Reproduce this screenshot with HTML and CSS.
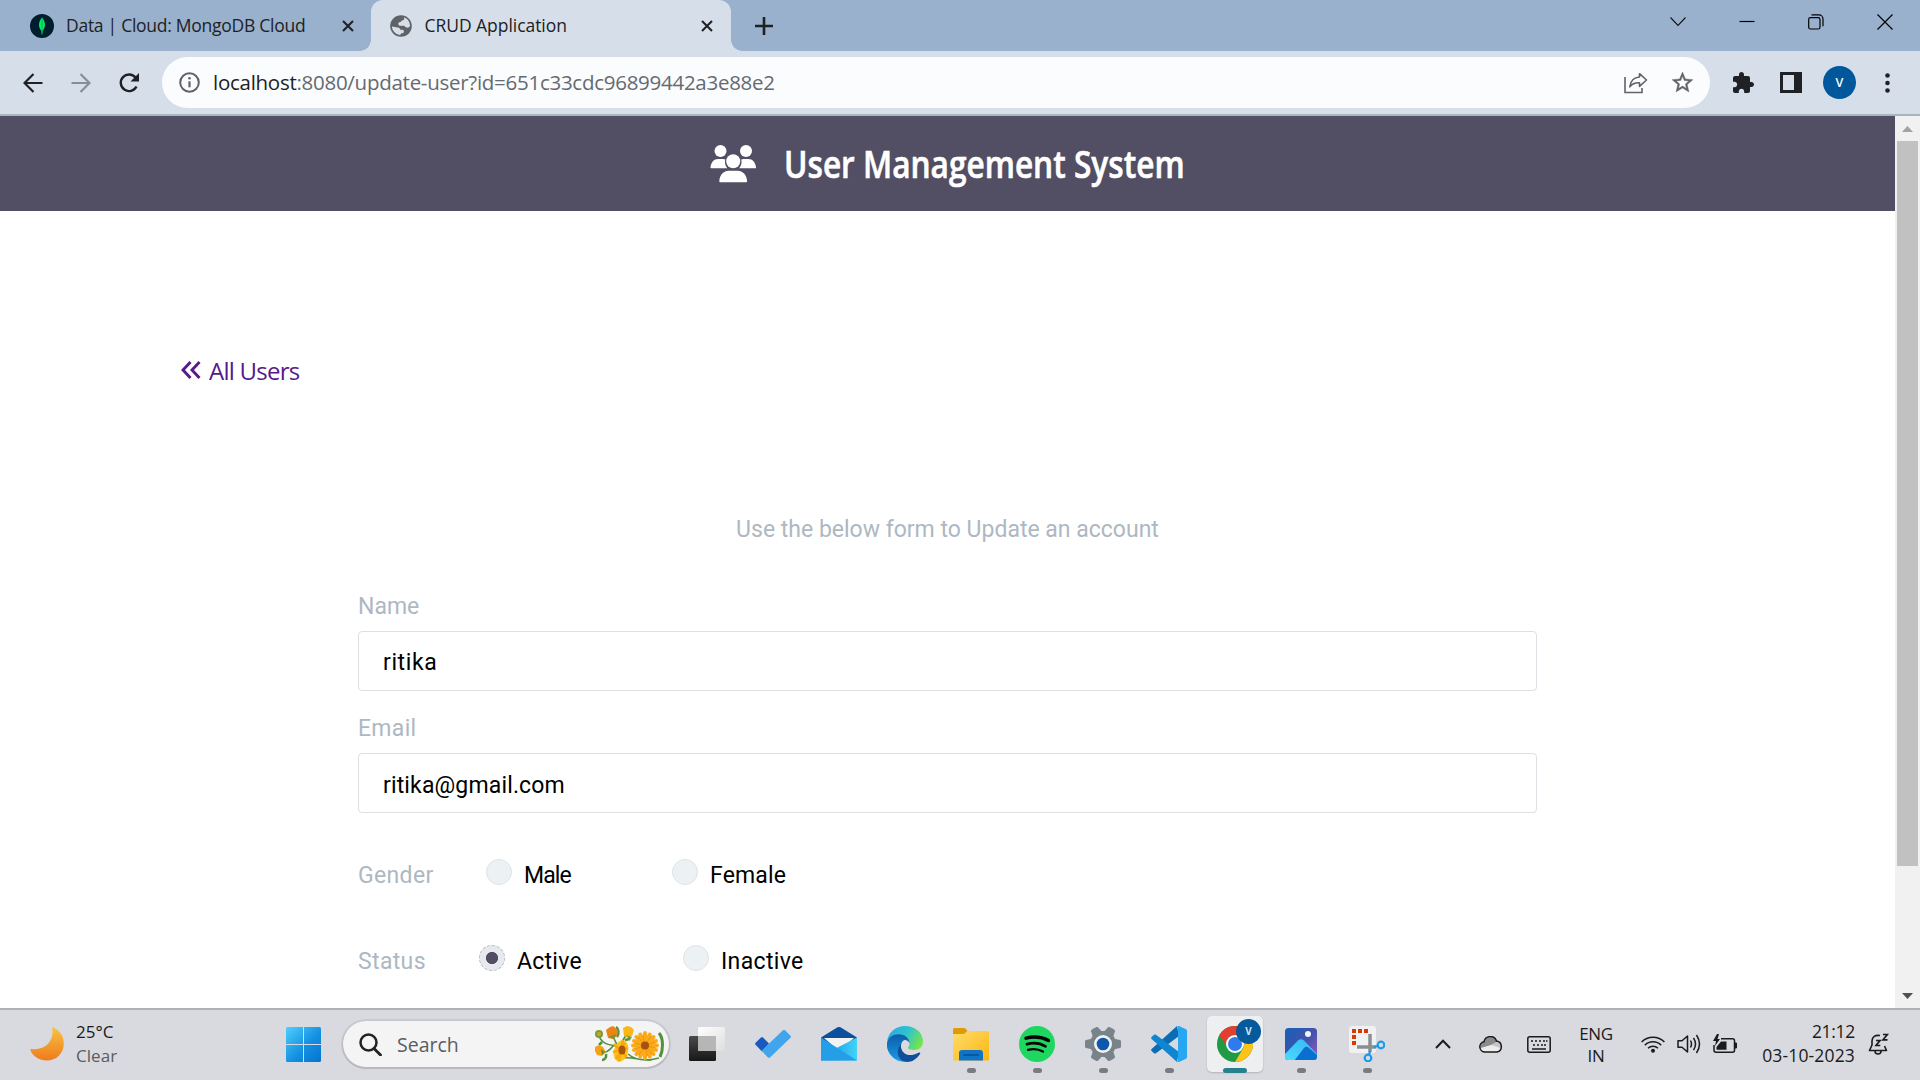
FILE: index.html
```html
<!DOCTYPE html>
<html lang="en">
<head>
<meta charset="utf-8">
<title>CRUD Application</title>
<link rel="stylesheet" href="styles.css">
</head>
<body>
<div class="tabstrip">
  <div class="tab tab-idle">
    <svg class="mongo" width="24" height="24" viewBox="0 0 24 24"><circle cx="12" cy="12" r="12" fill="#001e2b"/><path d="M12 3.500c-3.200 3.600-4.400 8.900-.6 13.600l.3 3.400h.6l.3-3.400C16.400 12.400 15.200 7.100 12 3.500z" fill="#00ed64"/><path d="M12 4v16" stroke="#00a35c" stroke-width=".8"/></svg>
    <span class="tab-title title-a">Data | Cloud: MongoDB Cloud</span>
    <svg class="close-a" width="12" height="12" viewBox="0 0 12 12"><path d="M1 1l10 10M11 1L1 11" stroke="#202124" stroke-width="2.100"/></svg>
  </div>
  <div class="tab tab-active">
    <svg class="globe" width="26" height="26" viewBox="0 0 24 24"><path fill="#5f6368" d="M12 2C6.480 2 2 6.480 2 12s4.480 10 10 10 10-4.480 10-10S17.520 2 12 2zm-1 18.200c-4.200-.4-7.300-3.900-7.300-7.700L9 13.300c1.500 0 2.300.9 2.300 2.200h1.800c1 0 1.600.7 1.600 1.700 0 1.200-1.200 1.500-2.200 1.500zM20.300 12c-1 2-2.500 1.700-3.700 1.200-1-.5-1.200-1.400-2.300-1.400h-2.600c-1.400 0-2.200-.8-2.200-1.900 0-1 .8-1.700 1.900-1.700.9 0 .9-1.200 1.900-1.500.9-.3 1.700-.5 1.700-1.500 0-.5-.2-.9-.5-1.200 3.500.9 5.800 4.200 5.800 8z"/></svg>
    <span class="tab-title title-b">CRUD Application</span>
    <svg class="close-b" width="12" height="12" viewBox="0 0 12 12"><path d="M1 1l10 10M11 1L1 11" stroke="#202124" stroke-width="2.100"/></svg>
  </div>
  <svg class="newtab" width="18" height="18" viewBox="0 0 18 18"><path d="M9 0v18M0 9h18" stroke="#202124" stroke-width="2.600"/></svg>
  <div class="wincontrols">
    <svg width="16" height="10" viewBox="0 0 16 10"><path d="M.5 .5L8 8.500l7.500-8" fill="none" stroke="#111" stroke-width="1.100"/></svg>
    <svg width="16" height="10" viewBox="0 0 16 10"><path d="M.5 4.500h15" stroke="#000" stroke-width="1.200"/></svg>
    <svg width="16" height="16" viewBox="0 0 16 16"><rect x=".7" y="3.700" width="11.300" height="11.300" rx="1.800" fill="none" stroke="#000" stroke-width="1.200"/><path d="M3.500.9h7.500a4 4 0 0 1 4 4v7.300" fill="none" stroke="#000" stroke-width="1.200"/></svg>
    <svg width="16" height="16" viewBox="0 0 16 16"><path d="M.5.5l15 15M15.500.5l-15 15" stroke="#000" stroke-width="1.200"/></svg>
  </div>
</div>

<div class="toolbar">
  <svg class="nav-back" width="20" height="20" viewBox="0 0 20 20"><path d="M19.500 10H2M10.500 1L1.500 10l9 9" fill="none" stroke="#202124" stroke-width="2.200"/></svg>
  <svg class="nav-forward" width="20" height="20" viewBox="0 0 20 20"><path d="M.5 10H18M9.500 1l9 9-9 9" fill="none" stroke="#878e97" stroke-width="2.200"/></svg>
  <svg class="nav-reload" width="22" height="22" viewBox="0 0 22 22"><path d="M18.500 14.500A8.300 8.300 0 1 1 17.500 5.500L19.500 8" fill="none" stroke="#202124" stroke-width="2.400"/><path d="M21 1v8.500h-8.500z" fill="#202124"/></svg>
  <div class="omnibox">
    <svg width="21" height="21" viewBox="0 0 21 21"><circle cx="10.500" cy="10.500" r="9.300" fill="none" stroke="#5f6368" stroke-width="2"/><path d="M10.500 9.300v6" stroke="#5f6368" stroke-width="2.200"/><circle cx="10.500" cy="6.300" r="1.300" fill="#5f6368"/></svg>
    <span class="url"><b>localhost</b>:8080/update-user?id=651c33cdc96899442a3e88e2</span>
    <svg class="share" width="24" height="22" viewBox="0 0 24 22"><path d="M1 5v15.500h17v-4.500" fill="none" stroke="#5f6368" stroke-width="1.600"/><path d="M15.500 1.700l7 6.300-7 6.300v-3.600c-4.500-.2-7.500 1-9.700 4.100.6-5.500 3.800-9.300 9.700-9.800z" fill="none" stroke="#5f6368" stroke-width="1.600" stroke-linejoin="round"/></svg>
    <svg class="star" width="25" height="25" viewBox="0 0 24 24"><path fill="#5f6368" stroke="#5f6368" stroke-width=".4" d="M22 9.240l-7.190-.62L12 2 9.190 8.630 2 9.240l5.460 4.730L5.820 21 12 17.270 18.180 21l-1.630-7.030L22 9.240zM12 15.400l-3.760 2.270 1-4.280-3.320-2.880 4.380-.38L12 6.100l1.710 4.040 4.380.38-3.320 2.880 1 4.280L12 15.400z"/></svg>
  </div>
  <svg class="puzzle" width="24" height="24" viewBox="0 0 24 24"><path fill="#202124" d="M20.500 11H19V7c0-1.100-.9-2-2-2h-4V3.500C13 2.120 11.880 1 10.500 1S8 2.120 8 3.500V5H4c-1.100 0-1.990.9-1.990 2v3.800H3.500c1.490 0 2.700 1.210 2.700 2.700s-1.210 2.700-2.700 2.700H2V20c0 1.100.9 2 2 2h3.800v-1.500c0-1.490 1.210-2.700 2.700-2.700s2.700 1.210 2.700 2.700V22H17c1.100 0 2-.9 2-2v-4h1.500c1.380 0 2.500-1.120 2.500-2.500S21.880 11 20.500 11z"/></svg>
  <svg class="sidepanel" width="22" height="21" viewBox="0 0 22 21"><path fill="#202124" fill-rule="evenodd" d="M0 0h22v21H0zM3 3v15h11V3z"/></svg>
  <span class="avatar">V</span>
  <svg class="dots" width="5" height="20" viewBox="0 0 5 20"><g fill="#202124"><circle cx="2.500" cy="2.500" r="2.300"/><circle cx="2.500" cy="10" r="2.300"/><circle cx="2.500" cy="17.500" r="2.300"/></g></svg>
</div>

<div class="viewport">
  <div class="page">
    <header class="site-header">
      <svg width="46" height="38" viewBox="0 0 46 38"><g fill="#fff"><circle cx="10.500" cy="6" r="6"/><circle cx="36" cy="6" r="6"/><path d="M1.200 23.200c-.5 0-.8-.4-.7-1C1 17.500 4 14 8 14h5c.9 0 1.600.2 2.300.5-.9 3.400 0 6.500 2 8.700zM45.300 23.200c.5 0 .8-.4.700-1-.5-4.700-3.500-8.200-7.500-8.200h-5c-.9 0-1.600.2-2.300.5.9 3.400 0 6.500-2 8.700z"/><circle cx="23.200" cy="16.200" r="7"/><path d="M10.500 37.300c-.8 0-1.300-.6-1.200-1.400.5-6 4.400-10.200 9.400-10.200h9c5 0 8.900 4.200 9.400 10.200.1.800-.4 1.400-1.200 1.400z"/></g></svg>
      <h1 class="brand"><span>User Management System</span></h1>
    </header>
    <a class="all-users" href="#"><svg width="20" height="18" viewBox="0 0 20 18"><path d="M9.500 1L2 9l7.500 8M18.500 1L11 9l7.500 8" fill="none" stroke="#551a8b" stroke-width="2.900"/></svg><span>All Users</span></a>
    <form class="form">
      <p class="lead">Use the below form to Update an account</p>
      <label class="label">Name</label>
      <div class="field field-name">ritika</div>
      <label class="label label-email">Email</label>
      <div class="field field-email">ritika@gmail.com</div>
      <div class="row">
        <span class="group">Gender</span>
        <label class="opt male"><i class="radio"></i><span>Male</span></label>
        <label class="opt female"><i class="radio"></i><span>Female</span></label>
      </div>
      <div class="row row-status">
        <span class="group">Status</span>
        <label class="opt active"><i class="radio on"></i><span>Active</span></label>
        <label class="opt inactive"><i class="radio"></i><span>Inactive</span></label>
      </div>
    </form>
  </div>
  <div class="scrollbar">
    <svg width="11" height="6" viewBox="0 0 11 6"><path d="M5.500 0L11 6H0z" fill="#a3a3a3"/></svg>
    <div class="thumb"></div>
    <svg class="down" width="11" height="6" viewBox="0 0 11 6"><path d="M5.500 6L11 0H0z" fill="#505050"/></svg>
  </div>
</div>

<div class="taskbar">
  <div class="weather">
    <svg width="34" height="34" viewBox="0 0 34 34"><defs><linearGradient id="moon" x1="0" y1="0" x2="0" y2="1"><stop offset="0" stop-color="#f6c544"/><stop offset="1" stop-color="#f07a1c"/></linearGradient></defs><path d="M22 0c8 3 12 9.500 11.800 17C33.500 27 26 33.500 17 33.500 9.500 33.500 3 29.500.5 23.500c-.4-1 .2-1.700 1.200-1.500C14 23.500 25 15 22 0z" fill="url(#moon)"/></svg>
    <div class="two-lines"><div>25°C</div><div class="muted">Clear</div></div>
  </div>
  <svg class="start" width="35" height="35" viewBox="0 0 35 35"><defs><linearGradient id="win" gradientUnits="userSpaceOnUse" x1="0" y1="0" x2="35" y2="35"><stop offset="0" stop-color="#4fd0fd"/><stop offset=".55" stop-color="#1491e2"/><stop offset="1" stop-color="#0573d0"/></linearGradient></defs><path fill="url(#win)" d="M1.500 0H17v17H0V1.500A1.500 1.500 0 0 1 1.500 0zM18 0h15.500A1.500 1.500 0 0 1 35 1.500V17H18zM0 18h17v17H1.500A1.500 1.500 0 0 1 0 33.500zM18 18h17v15.500a1.500 1.500 0 0 1-1.500 1.500H18z"/></svg>
  <div class="search">
    <svg width="23" height="23" viewBox="0 0 23 23"><circle cx="9.500" cy="9.500" r="8" fill="none" stroke="#222" stroke-width="2.500"/><path d="M15 15.500l6.500 6.500" stroke="#222" stroke-width="2.800" stroke-linecap="round"/></svg>
    <span>Search</span>
    <svg class="flowers" width="72" height="38" viewBox="0 0 72 38">
      <g fill="none" stroke="#54913c" stroke-width="1.600"><path d="M5 11c3 8 10 9 18 10M16 8c5 4 4 8 7 11M33 8l-6 11M7 28c6 0 9-3 12-7M34 29c8 7 20 7 31 4M24 34c12-4 20 2 34 1"/><path d="M65 8c5 6 4 18 1 24" stroke-width="3"/><path d="M23 12c3-4 1-9-1-10M8 17l-3 3M12 29c1 4-2 6-4 6M36 14l-5 1" stroke-width="2.500"/></g>
      <circle cx="5" cy="9" r="4" fill="#7e9a35"/><circle cx="5" cy="9" r="2" fill="#c9a62d"/>
      <path d="M12 5l4-3 3-1 5 4-1 6-4 3-5-1z" fill="#ea8414"/><path d="M15 12l5 2 2-5z" fill="#719434"/>
      <path d="M29 3l4-2 4 1 3 3-2 6-4 2-4-2z" fill="#fbb815"/><path d="M32 10l6 2-2 3z" fill="#76a03c"/>
      <path d="M1 22l4-2 4 2 3 5-4 4-5-1-2-4z" fill="#f7a012"/><path d="M7 24l4 3-3 3z" fill="#638e35"/>
      <ellipse cx="27" cy="26" rx="7" ry="11" transform="rotate(15 27 26)" fill="#fcc419"/>
      <path d="M29 15l-4 21M20 19l13 13M19 27l15-4M22 34l9-16" stroke="#f9a80f" stroke-width="2.500"/><ellipse cx="28" cy="25" rx="3.500" ry="4.500" fill="#a9560c"/>
      <path d="M51 8v25M39 20.500h24M42.500 12l17 17M59.500 12l-17 17M46.200 9.500l9.600 22M55.800 9.500l-9.600 22M40 16l22 9M62 16l-22 9" stroke="#fbab1a" stroke-width="4" stroke-linecap="round"/>
      <path d="M48.500 10l5 21M40.500 18l21 5M44 12l14 17M57 11L45 30M61 17l-20 7" stroke="#ef8e0c" stroke-width=".8"/>
      <circle cx="51" cy="20.500" r="4" fill="#a4520f"/>
    </svg>
  </div>
  <div class="apps">
    <div class="app"><svg width="36" height="36" viewBox="0 0 36 36"><defs><linearGradient id="tv" x1="0" y1="0" x2="0" y2="1"><stop offset="0" stop-color="#4a4a4a"/><stop offset="1" stop-color="#171717"/></linearGradient><linearGradient id="tw" x1="0" y1="0" x2="1" y2="1"><stop offset="0" stop-color="#fff"/><stop offset="1" stop-color="#dedede"/></linearGradient></defs><rect y="10" width="27" height="25" rx="1.500" fill="url(#tv)"/><rect x="9" y="1" width="27" height="24" rx="1.500" fill="url(#tw)"/><path d="M9 10h18v15H10.500A1.500 1.500 0 0 1 9 23.500z" fill="#b6b6b6"/></svg></div>
    <div class="app"><svg width="36" height="36" viewBox="0 0 36 36"><path d="M.3 18.500q-.5-1 .3-1.700L6 11.500q1-.8 2 0l6 6-7 8z" fill="#185abd"/><path d="M28 4.200q1-.9 2 0l5.500 5.500q.9 1 0 2L15 31.500q-1 .9-2 0L6.500 24.800z" fill="#41a5ee"/></svg></div>
    <div class="app"><svg width="36" height="36" viewBox="0 0 36 36"><defs><linearGradient id="mail" x1="0" y1="0" x2="1" y2="0"><stop offset="0" stop-color="#0f8de0"/><stop offset="1" stop-color="#42d2f8"/></linearGradient></defs><path d="M0 11.500L16.500 1.300q1.500-.8 3 0L36 11.500 31 18H5z" fill="#0a509c"/><path d="M3 12h30L18 25z" fill="#f3f3f3"/><path d="M36 11.500V34.500H0V30z" fill="url(#mail)"/><path d="M0 11.500L36 34.500H0z" fill="#249fe7"/></svg></div>
    <div class="app"><svg width="36" height="36" viewBox="0 0 36 36"><defs><linearGradient id="eg" x1="0" y1=".2" x2="1" y2=".6"><stop offset="0" stop-color="#2aa9e6"/><stop offset=".5" stop-color="#2fc2cf"/><stop offset="1" stop-color="#74e64b"/></linearGradient><linearGradient id="eb" x1="0" y1="0" x2="0" y2="1"><stop offset="0" stop-color="#0d5ca8"/><stop offset="1" stop-color="#1a9be9"/></linearGradient></defs><path d="M0 16C1 6.500 8.500 0 18 0c10.500 0 18 7 18 15.500 0 5.500-4 8.500-8.500 8.500-4 0-6.500-1-6.500-2.300 0-.7 1.500-1.500 1.500-4 0-3-3.500-6.500-9-6.500C7 9.200 1.500 11.500 0 16z" fill="url(#eg)"/><path d="M0 17c1-5.500 6-8.700 11.500-8.700 6.500 0 11 4 11 9-1-2.500-3-3.300-4.500-3.300-2 0-4.500 3-4 7.500.8 6.500 6.500 11 12.500 10.200C21 36.500 14 36.700 9 33.500 3 29.800-.8 24 0 17z" fill="url(#eb)"/><path d="M14.300 18c-2 7 4.700 13 12.700 10.500 2.500-.7 4.500-2 5.500-2 .7 0 1 .5.600 1.200C28 36 20 37.500 15 34.500 9.500 31 9.500 22 14.300 18z" fill="#0d4f9b"/></svg></div>
    <div class="app running"><svg width="36" height="36" viewBox="0 0 36 36"><defs><linearGradient id="fo" x1="0" y1="0" x2="1" y2="1"><stop offset="0" stop-color="#ffdb6e"/><stop offset="1" stop-color="#fcb70c"/></linearGradient></defs><path d="M0 3.500A1.500 1.500 0 0 1 1.500 2H11q1.500 0 2.500 1.500L15 6v6H0z" fill="#dd9c06"/><path d="M0 8h11l3.500-3H34.500A1.500 1.500 0 0 1 36 6.500V34.500H0z" fill="url(#fo)"/><path d="M6 34.500V27a3 3 0 0 1 3-3h18a3 3 0 0 1 3 3v7.500z" fill="#0f73c6"/><path d="M11 29h14" stroke="#0a4f92" stroke-width="1.700" stroke-linecap="round"/></svg></div>
    <div class="app running"><svg width="36" height="36" viewBox="0 0 36 36"><circle cx="18" cy="18" r="18" fill="#1ed760"/><g fill="none" stroke="#050505" stroke-linecap="round"><path d="M7 12.200c7.500-2 16-1.200 22.500 2.300" stroke-width="3.400"/><path d="M8 18.200c6.300-1.700 13.200-1 18.500 2.200" stroke-width="2.800"/><path d="M9 23.800c5.200-1.300 10.500-.8 15 1.800" stroke-width="2.300"/></g></svg></div>
    <div class="app running"><svg width="36" height="36" viewBox="0 0 36 36"><defs><g id="teeth"><path d="M12.500 8L14 1Q14.200.2 15 .1q3-.3 6 0 .8.100 1 .9L23.500 8z"/><path d="M12.500 28L14 35q.2.800 1 .9 3 .3 6 0 .8-.1 1-.9L23.500 28z"/></g></defs><g fill="#79838a"><circle cx="18" cy="18" r="13"/><use href="#teeth" transform="rotate(90 18 18)"/><use href="#teeth" transform="rotate(30 18 18)"/><use href="#teeth" transform="rotate(-30 18 18)"/></g><circle cx="18" cy="18" r="9" fill="#f0f1f3"/><circle cx="18" cy="18" r="6.300" fill="#0d58ab"/></svg></div>
    <div class="app running"><svg width="36" height="36" viewBox="0 0 36 36"><path d="M26 0l2 10L5 27.200q-1 .8-2 0L.6 25q-1-1 0-2z" fill="#0a6db4"/><path d="M.6 13q-1-1 0-2L3 8.800q1-.8 2 0L28 26l-2 10z" fill="#0f86d1"/><path d="M26 0q1-.5 2 0l7 3.300q1 .5 1 1.700v26q0 1.200-1 1.700L28 36q-1 .5-2 0 1 0 1-2V2q0-2-1-2z" fill="#27a6f2"/></svg></div>
    <div class="app current"><svg width="36" height="36" viewBox="0 0 36 36"><circle cx="18" cy="18" r="18" fill="#219a45"/><path d="M2.400 9A18 18 0 0 1 33.600 9H18A9 9 0 0 0 9.500 20z" fill="#e43e2f"/><path d="M33.600 9A18 18 0 0 1 18 36L26 22.500A9 9 0 0 0 18 9z" fill="#fcc31a"/><circle cx="18" cy="18" r="9" fill="#fff"/><circle cx="18" cy="18" r="7" fill="#2f7bed"/></svg><span class="badge">V</span></div>
    <div class="app running"><svg width="32" height="32" viewBox="0 0 32 32"><defs><linearGradient id="ph" x1="0" y1="0" x2="1" y2=".8"><stop offset="0" stop-color="#185fb8"/><stop offset=".6" stop-color="#4253ab"/><stop offset="1" stop-color="#8858bd"/></linearGradient><linearGradient id="pm" x1="0" y1="1" x2="1" y2="0"><stop offset="0" stop-color="#49dcff"/><stop offset="1" stop-color="#35b4f4"/></linearGradient><clipPath id="pc"><rect width="32" height="32" rx="3.500"/></clipPath></defs><g clip-path="url(#pc)"><rect width="32" height="32" fill="url(#ph)"/><path d="M-1 27L13 12.500q3-2.500 6 0L33 27v6H-1z" fill="url(#pm)"/><path d="M9 33L19 20q2.500-2.500 5 0l9 8v5z" fill="#0b6fd0"/><circle cx="23" cy="6" r="3" fill="#f2f4fa"/></g></svg></div>
    <div class="app running"><svg width="36" height="36" viewBox="0 0 36 36"><rect width="27" height="27" rx="3" fill="#f0f1f2"/><path d="M3 5h16M5 9v4M5 15v4" stroke="#d83b01" stroke-width="4" stroke-dasharray="4 2"/><path d="M21 8v18M8 21h19" stroke="#8b8f93" stroke-width="3.500"/><g fill="none" stroke="#1a9be6" stroke-width="2.200"><circle cx="32" cy="19" r="3.300"/><circle cx="19" cy="32" r="3.300"/><path d="M25 21l4-1M21 25l-1 4"/></g></svg></div>
  </div>
  <div class="tray">
    <svg class="t-up" width="16" height="10" viewBox="0 0 16 10"><path d="M1 9l7-7.300L15 9" fill="none" stroke="#1b1b1b" stroke-width="2"/></svg>
    <svg class="t-cloud" width="24" height="17" viewBox="0 0 24 17"><path d="M6 16a5.200 5.200 0 0 1-1-10.300A6.500 6.500 0 0 1 17.500 5 5.600 5.600 0 0 1 18 16z" fill="#ededee"/><path d="M1.500 12A5.200 5.200 0 0 1 5 5.700 6.500 6.500 0 0 1 17.500 5L20 6l-8 3z" fill="#8b8b8d"/><path d="M12 9l6-3.500 4.500 3 .5 4z" fill="#c7c7c9"/><path d="M6 16a5.200 5.200 0 0 1-1-10.300A6.500 6.500 0 0 1 17.500 5 5.600 5.600 0 0 1 18 16z" fill="none" stroke="#1b1b1b" stroke-width="1.500"/></svg>
    <svg class="t-kbd" width="24" height="17" viewBox="0 0 24 17"><rect x=".8" y=".8" width="22.400" height="15.400" rx="2" fill="none" stroke="#1b1b1b" stroke-width="1.500"/><path d="M4 5h2M8 5h2M12 5h2M16 5h2M19 5h1.500M6 9h2M10 9h2M14 9h2M17 9h2" stroke="#1b1b1b" stroke-width="1.700"/><path d="M5 13h14" stroke="#1b1b1b" stroke-width="1.500"/></svg>
    <div class="lang">ENG<br>IN</div>
    <svg class="t-wifi" width="24" height="18" viewBox="0 0 24 18"><g fill="none" stroke="#1b1b1b" stroke-width="1.500"><path d="M.6 7a16 16 0 0 1 22.800 0M3.800 10.200a11.600 11.600 0 0 1 16.400 0M7 13.300a7.200 7.200 0 0 1 10 0"/></g><circle cx="12" cy="15.700" r="2" fill="#1b1b1b"/></svg>
    <svg class="t-sound" width="24" height="20" viewBox="0 0 24 20"><g fill="none" stroke="#1b1b1b" stroke-width="1.500" stroke-linejoin="round"><path d="M1 6.800h4L10.500 2v16L5 13.200H1z"/><path d="M13.500 6.500q2 3.500 0 7M16.500 3.800q4 6.200 0 12.400M19.500 1q6 9 0 18"/></g></svg>
    <svg class="t-batt" width="24" height="20" viewBox="0 0 24 20"><path d="M8 4.800h11.500a2 2 0 0 1 2 2v9.500a2 2 0 0 1-2 2H3a2 2 0 0 1-2-2V11" fill="none" stroke="#1b1b1b" stroke-width="1.500"/><path d="M8 7.500h5.500v8.300H3.500V13z" fill="#1b1b1b"/><path d="M4 0L0 7h3l-1 5 5-7H4.500L6 0z" fill="#1b1b1b"/><path d="M22 9h1.500v5H22z" fill="#1b1b1b" stroke="#1b1b1b"/></svg>
    <div class="clock"><div class="time">21:12</div><div class="date">03-10-2023</div></div>
    <svg class="t-bell" width="22" height="22" viewBox="0 0 22 22"><path d="M12 2.500q-7.500-1-8 5.500v4L1.500 17.500H18.500L16.500 13" fill="none" stroke="#1b1b1b" stroke-width="1.600" stroke-linejoin="round"/><path d="M7 18a3 3 0 0 0 6 0" fill="none" stroke="#1b1b1b" stroke-width="1.600"/><path d="M8 7.500h4l-4 5h4.300M15 1.500h4.300L15 6.800h4.500" fill="none" stroke="#1b1b1b" stroke-width="1.700"/></svg>
  </div>
</div>
</body>
</html>
```
FILE: styles.css
```css
* { box-sizing: border-box; }
body {
  margin: 0;
  width: 1920px;
  height: 1080px;
  overflow: hidden;
  display: flex;
  flex-direction: column;
  background: #fff;
  font-family: "Open Sans", sans-serif;
  color: #000;
}
svg { display: block; flex: none; }

/* Browser tabs */
.tabstrip { height: 51px; flex: none; display: flex; align-items: center; background: #99b1cd; color: #202124; }
.tab { height: 51px; display: flex; align-items: center; flex: none; }
.tab-idle { width: 371px; padding-left: 30px; }
.tab-active { position: relative; width: 360px; padding-left: 17px; background: #d6dfe9; border-radius: 12px 12px 0 0; }
.tab-active::before, .tab-active::after { content: ""; position: absolute; bottom: 0; width: 11px; height: 11px; }
.tab-active::before { left: -11px; background: radial-gradient(circle at 0 0, transparent 10.500px, #d6dfe9 11px); }
.tab-active::after { right: -11px; background: radial-gradient(circle at 100% 0, transparent 10.500px, #d6dfe9 11px); }
.tab-title { font-size: 17.500px; line-height: 26px; padding-bottom: 1px; white-space: nowrap; }
.title-a { width: 288px; padding-left: 12px; letter-spacing: -0.27px; }
.title-b { width: 288px; padding-left: 10.500px; letter-spacing: -0.05px; }
.close-b { margin-left: -1.500px; }
.newtab { margin-left: 24px; }
.wincontrols { margin-left: auto; padding: 0 27px 8px 0; display: flex; align-items: center; gap: 53px; }

/* Address bar */
.toolbar { height: 65px; flex: none; display: flex; align-items: center; padding-left: 23px; background: #d6dfe9; border-bottom: 2px solid #a9b4bf; }
.nav-forward { margin-left: 28px; }
.nav-reload { margin-left: 27px; }
.omnibox { width: 1548px; height: 51px; margin-left: 22px; padding-left: 17px; display: flex; align-items: center; border-radius: 26px; background: #fbfcfe; }
.url { width: 1437px; padding: 0 0 2px 13px; font-size: 20.500px; letter-spacing: -0.27px; color: #646a70; white-space: nowrap; }
.url b { font-weight: 400; color: #202124; }
.share { margin-left: -13px; }
.star { margin-left: 22px; }
.puzzle { margin-left: 21px; }
.sidepanel { margin-left: 25px; }
.avatar { width: 33px; height: 33px; margin-left: 21px; border-radius: 50%; background: #00579c; color: #fff; font-size: 12.500px; font-weight: 600; line-height: 33px; text-align: center; }
.dots { margin-left: 28.500px; }

/* Page content */
.viewport { height: 892px; flex: none; display: flex; }
.page { width: 1895px; display: flex; flex-direction: column; }
.site-header { height: 95px; display: flex; align-items: center; justify-content: center; gap: 28px; background: #524e63; color: #fff; }
.brand { margin: 0; width: 401px; font-size: 37px; font-weight: 600; line-height: 50px; white-space: nowrap; }
.brand span { display: inline-block; transform: scaleX(0.855); transform-origin: 0 50%; -webkit-text-stroke: 0.6px #fff; }
.all-users { margin: 142px 0 0 181px; height: 34px; display: flex; align-items: center; gap: 8px; font-size: 24px; letter-spacing: -0.75px; color: #551a8b; text-decoration: none; }
.form { width: 1179px; margin: 126px auto 0; display: flex; flex-direction: column; font-family: Roboto, sans-serif; font-size: 23px; line-height: 34px; }
.lead { margin: 0 0 43px; text-align: center; color: #adb8c2; }
.label, .group { color: #adb8c2; }
.field { height: 60px; margin-top: 7px; padding: 2px 24px 0; line-height: 58px; border: 1px solid #dcdfe4; border-radius: 4px; }
.field-name { letter-spacing: 0.6px; }
.field-email { padding-top: 4px; line-height: 56px; letter-spacing: 0.15px; }
.label-email { margin-top: 21px; letter-spacing: 0.3px; }
.row { height: 34px; margin-top: 46px; display: flex; align-items: center; }
.row-status { margin-top: 52px; }
.group { letter-spacing: 0.35px; }
.row .group { width: 128px; }
.row-status .group { width: 121px; }
.opt { display: flex; align-items: center; gap: 12px; }
.radio { width: 26px; height: 26px; margin-bottom: 8px; border: 1px solid #dde3e7; border-radius: 50%; background: #ecf1f4; }
.radio.on { border: 1px dashed #b6bac4; background: radial-gradient(circle, #524e63 5.700px, #e6e9ed 6.400px); }
.male { width: 186px; }
.male span { letter-spacing: -0.9px; }
.female span { letter-spacing: 0.15px; }
.active { width: 204px; }
.active span { letter-spacing: 0.25px; }
.inactive span { letter-spacing: 0.35px; }
.scrollbar { width: 25px; display: flex; flex-direction: column; align-items: center; padding: 10px 0 9px; background: #f1f1f1; }
.thumb { width: 21px; height: 725px; margin-top: 9px; background: #c1c1c1; }
.down { margin-top: auto; }

/* Taskbar */
.taskbar { height: 72px; flex: none; display: flex; align-items: center; padding-bottom: 2px; background: #d9dadf; border-top: 2px solid #b0b0b5; color: #1b1b1b; }
.weather { width: 286px; padding-left: 30px; display: flex; align-items: center; gap: 12px; }
.two-lines { font-size: 17px; line-height: 24px; letter-spacing: 0.05px; margin-bottom: 1px; }
.muted { color: #5b5c60; }
.search { width: 326px; height: 46px; margin-left: 22px; padding-left: 16px; display: flex; align-items: center; border-radius: 23px; background: #f4f4f5; box-shadow: 0 1px 0 1px #b9b9be, 0 0 0 2px #c9c9cf; font-size: 19.500px; color: #5b5c60; }
.search span { width: 212px; padding-left: 15px; }
.apps { margin-left: 5px; display: flex; }
.app { position: relative; width: 66px; height: 56px; display: flex; align-items: center; justify-content: center; }
.running::after, .current::after { content: ""; position: absolute; left: 29px; bottom: -1px; width: 9px; height: 5px; border-radius: 2.500px; background: #7a7b7e; }
.current { width: 56px; margin: 0 5px; border-radius: 5px; background: #eeeff1; box-shadow: 0 1px 2px rgba(0, 0, 0, 0.18); }
.current::after { left: 16px; width: 24px; background: #26818f; }
.badge { position: absolute; left: 29px; top: 3px; width: 25px; height: 25px; border-radius: 50%; background: #045a9c; color: #d3e2ee; font-size: 10px; font-weight: 700; line-height: 25px; text-align: center; }
.tray { display: flex; align-items: center; }
.t-up { margin-left: 35px; }
.t-cloud { margin-left: 28px; }
.t-kbd { margin-left: 24px; }
.lang { width: 60px; margin: 2px 0 0 15px; font-size: 17px; line-height: 22px; letter-spacing: -0.3px; text-align: center; }
.t-wifi { margin-left: 15px; }
.t-sound { margin-left: 12px; }
.t-batt { margin-left: 12px; }
.clock { width: 118px; font-size: 17.500px; line-height: 24px; text-align: right; margin-bottom: 2px; }
.time { letter-spacing: -0.3px; }
.date { letter-spacing: 0.15px; }
.t-bell { margin-left: 13px; }
```
